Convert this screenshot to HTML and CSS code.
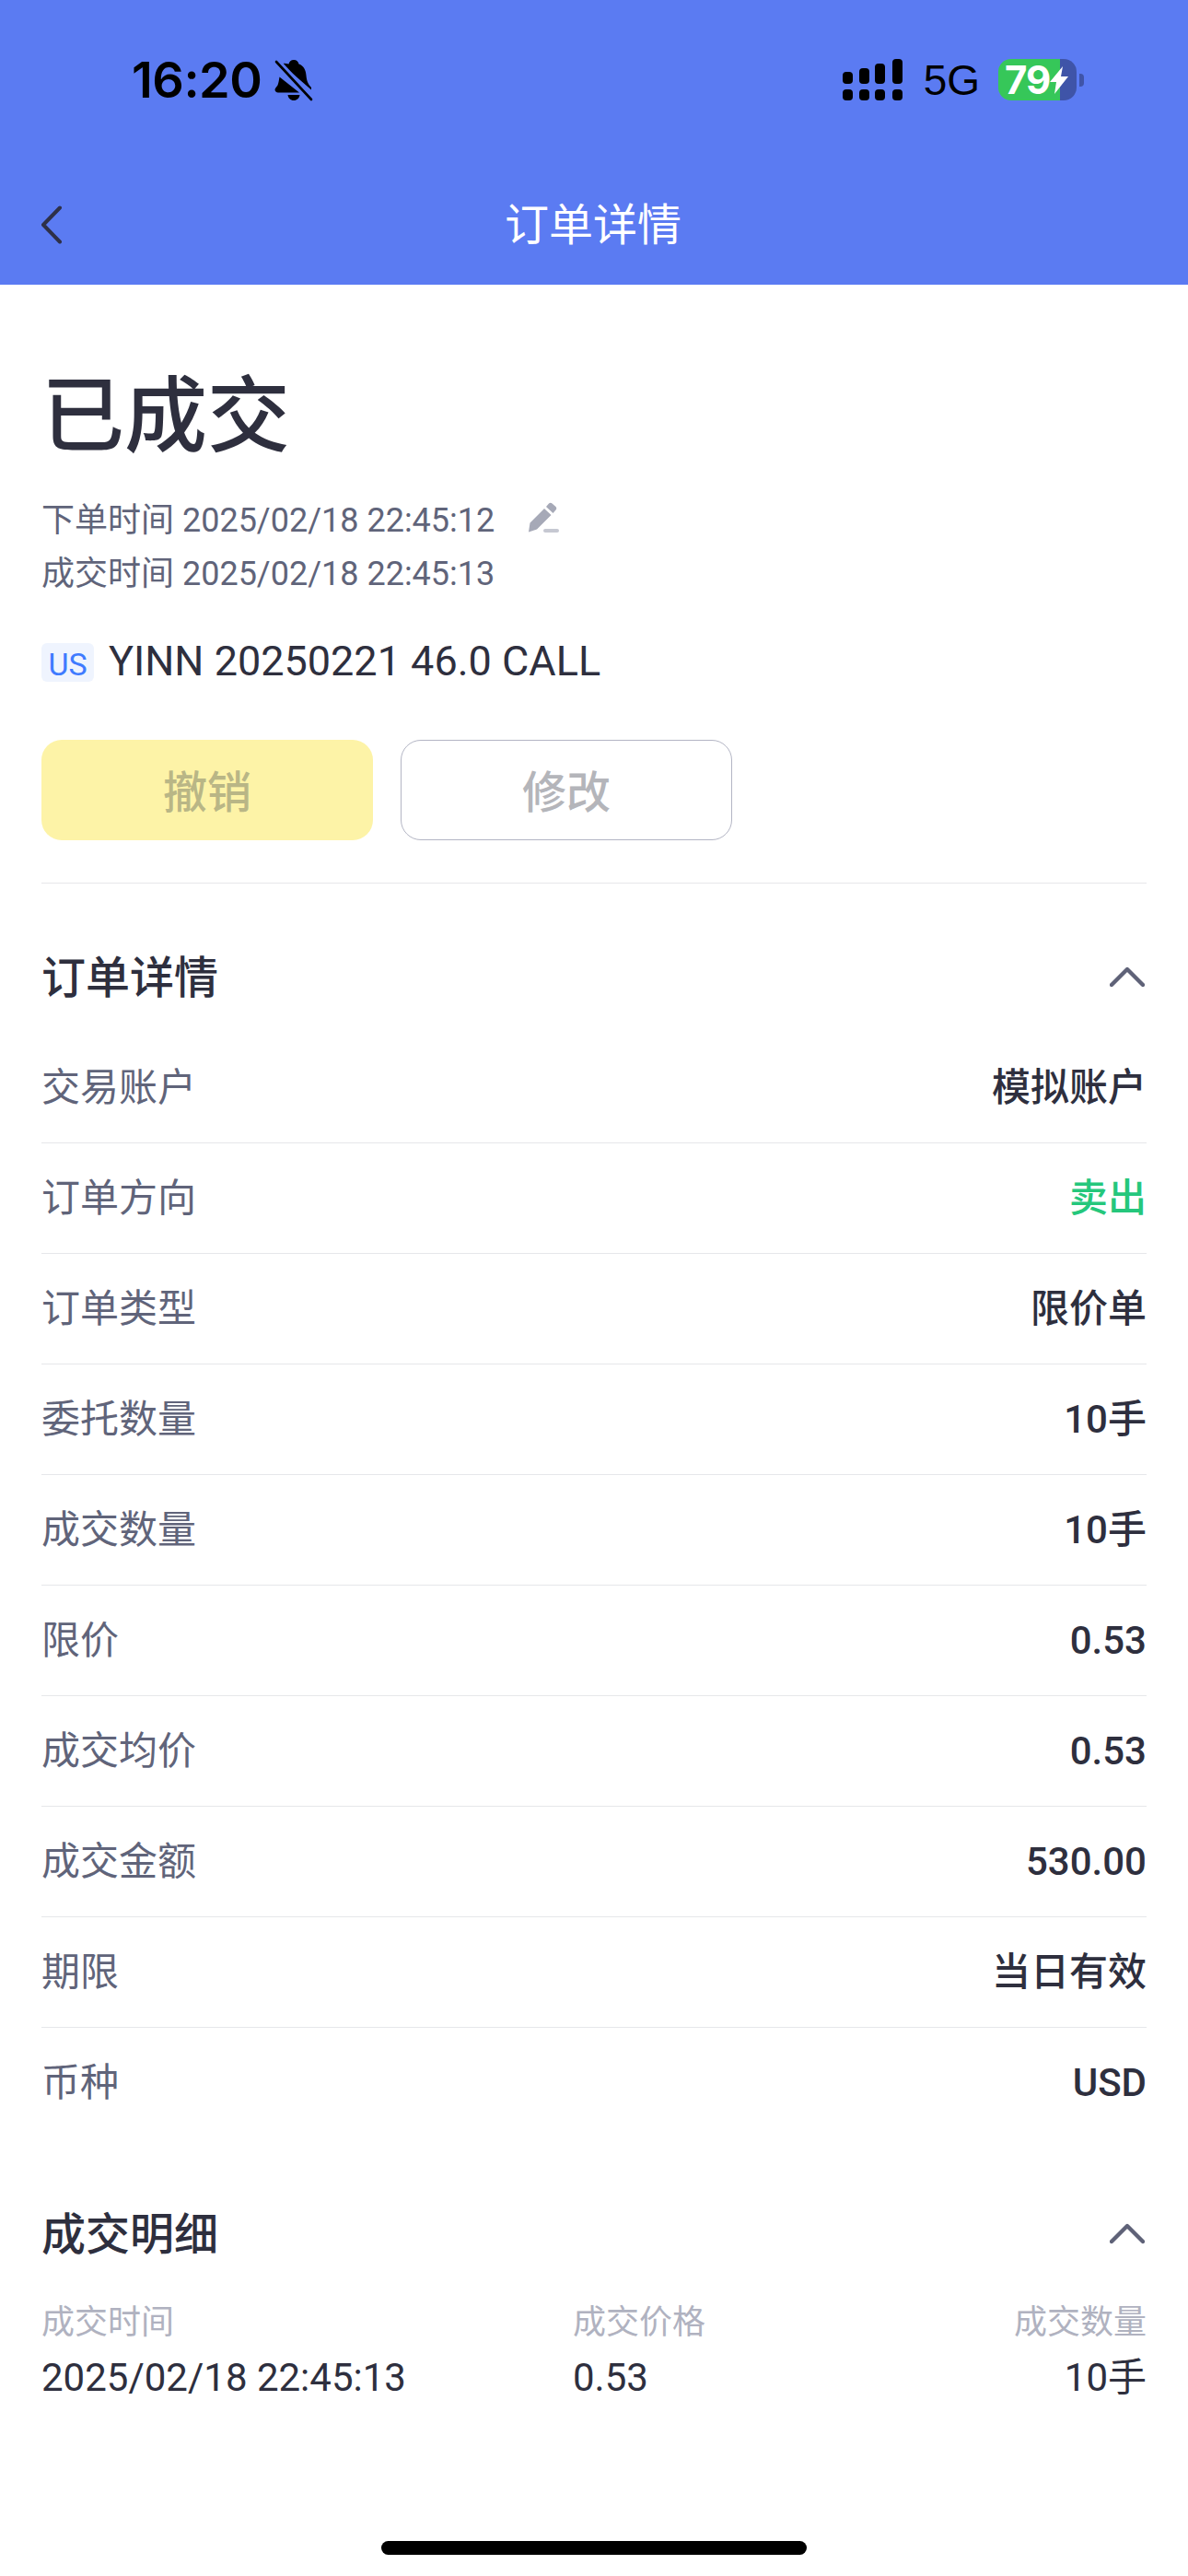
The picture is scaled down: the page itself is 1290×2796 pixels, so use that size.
FILE: index.html
```html
<!DOCTYPE html>
<html lang="zh-CN">
<head>
    <meta charset="UTF-8">
    <meta name="viewport" content="width=device-width, initial-scale=1.0">
    <title>订单详情</title>
    <link rel="stylesheet" href="styles.css">
</head>
<body>
    <header class="top">
        <div class="status">
            <div class="status-left">
                <span class="clock">16:20</span>
                <svg class="bell" viewBox="0 0 42 46" width="42" height="46">
                    <path d="M21 1c3 0 5 2 5.500 4.500C32 7.500 34 12 34.500 18c.5 6 2 9 5.500 13v2.500L8 5.500C10 4 12.500 5 15.500 5.500 16 3 18 1 21 1zM5.500 19.500 27 36.500H4c-2 0-3.500-1.500-3.500-3 0-2 2-3 3-5 1-2.500 1.500-6 2-9zM14.500 39h13c-.5 3.500-3 6-6.500 6s-6-2.500-6.500-6z" fill="#000"/>
                    <path d="M2 3l38 41" stroke="#000" stroke-width="2.600" stroke-linecap="round"/>
                    <path d="M5 1.500l36 39" stroke="#5b7bf2" stroke-width="2.400"/>
                </svg>
            </div>
            <div class="status-right">
                <svg class="signal" viewBox="0 0 65 45" width="65" height="45">
                    <rect x="0" y="14" width="11" height="13" rx="4"/>
                    <rect x="18" y="10" width="11" height="17" rx="4"/>
                    <rect x="35" y="5" width="11" height="22" rx="4"/>
                    <rect x="54" y="0" width="11" height="27" rx="4"/>
                    <rect x="0" y="33" width="11" height="12" rx="4"/>
                    <rect x="18" y="33" width="11" height="12" rx="4"/>
                    <rect x="35" y="33" width="11" height="12" rx="4"/>
                    <rect x="54" y="33" width="11" height="12" rx="4"/>
                </svg>
                <span class="net">5G</span>
                <div class="battery">
                    <span class="battery-num">79</span>
                    <svg class="bolt" viewBox="0 0 20 30" width="20" height="30">
                        <path d="M14 0 0 17h7L5 30 20 11h-8z" fill="#fff"/>
                    </svg>
                </div>
                <span class="battery-cap"></span>
            </div>
        </div>
        <nav class="nav">
            <svg class="back" viewBox="0 0 24 42" width="24" height="42">
                <path d="M21 2.500 3 21l18 18.500" fill="none" stroke="#2e3048" stroke-width="4" stroke-linecap="round" stroke-linejoin="round"/>
            </svg>
            <span class="nav-title">订单详情</span>
        </nav>
    </header>

    <main class="content">
        <h1 class="state">已成交</h1>
        <div class="times">
            <div class="time-line">
                <span>下单时间 2025/02/18 22:45:12</span>
                <svg class="pen" viewBox="0 0 34 34" width="34" height="34">
                    <path d="M23 1.500c1-1 2.500-1 3.500 0l4 3.500c1 1 1 2.500 0 3.500l-3 3.500-7.500-7zM18 7l7.500 7L10 29.500l-9 3 1.500-10z" fill="#a6a9b7"/>
                    <rect x="17" y="29" width="17" height="4" rx="2" fill="#c6c8d2"/>
                </svg>
            </div>
            <div class="time-line">成交时间 2025/02/18 22:45:13</div>
        </div>
        <div class="symbol">
            <span class="market">US</span>
            <span>YINN 20250221 46.0 CALL</span>
        </div>
        <div class="actions">
            <button class="btn btn-cancel">撤销</button>
            <button class="btn btn-edit">修改</button>
        </div>

        <section class="detail">
            <div class="section-head">
                <h2>订单详情</h2>
                <svg class="fold" viewBox="0 0 38 24" width="38" height="24">
                    <path d="M2 21 19 4l17 17" fill="none" stroke="#5f6278" stroke-width="4.400" stroke-linecap="round" stroke-linejoin="round"/>
                </svg>
            </div>
            <div class="row"><span class="row-label">交易账户</span><span class="row-value">模拟账户</span></div>
            <div class="row"><span class="row-label">订单方向</span><span class="row-value sell">卖出</span></div>
            <div class="row"><span class="row-label">订单类型</span><span class="row-value">限价单</span></div>
            <div class="row"><span class="row-label">委托数量</span><span class="row-value">10手</span></div>
            <div class="row"><span class="row-label">成交数量</span><span class="row-value">10手</span></div>
            <div class="row"><span class="row-label">限价</span><span class="row-value">0.53</span></div>
            <div class="row"><span class="row-label">成交均价</span><span class="row-value">0.53</span></div>
            <div class="row"><span class="row-label">成交金额</span><span class="row-value">530.00</span></div>
            <div class="row"><span class="row-label">期限</span><span class="row-value">当日有效</span></div>
            <div class="row"><span class="row-label">币种</span><span class="row-value">USD</span></div>
        </section>

        <section class="fills">
            <div class="section-head">
                <h2>成交明细</h2>
                <svg class="fold" viewBox="0 0 38 24" width="38" height="24">
                    <path d="M2 21 19 4l17 17" fill="none" stroke="#5f6278" stroke-width="4.400" stroke-linecap="round" stroke-linejoin="round"/>
                </svg>
            </div>
            <div class="fill-grid">
                <span class="fill-label">成交时间</span>
                <span class="fill-label">成交价格</span>
                <span class="fill-label right">成交数量</span>
                <span class="fill-value">2025/02/18 22:45:13</span>
                <span class="fill-value">0.53</span>
                <span class="fill-value right">10手</span>
            </div>
        </section>
    </main>

    <div class="home-bar"></div>
</body>
</html>
```

FILE: styles.css
```css
html, body {
    margin: 0;
    padding: 0;
}
body {
    width: 1290px;
    height: 2796px;
    overflow: hidden;
    background-color: #fff;
    color: #2e2f3e;
    font-family: Roboto, "Noto Sans CJK SC", sans-serif;
    position: relative;
}

/* Blue header */
.top {
    height: 309px;
    background-color: #5b7bf2;
}
.status {
    height: 177px;
    box-sizing: border-box;
    padding: 64px 113px 0 143px;
    display: flex;
    justify-content: space-between;
    align-items: flex-start;
    color: #000;
}
.status-left, .status-right {
    display: flex;
    align-items: center;
    height: 45px;
}
.clock {
    font-family: Inter, "Liberation Sans", sans-serif;
    font-size: 54px;
    font-weight: 600;
    letter-spacing: -0.5px;
}
.bell {
    margin-left: 14px;
}
.signal {
    fill: #000;
}
.net {
    font-family: "Liberation Sans", sans-serif;
    font-size: 46px;
    margin-left: 23px;
    margin-right: 20px;
}
.battery {
    width: 85px;
    height: 45px;
    border-radius: 14px;
    background: linear-gradient(90deg, #36c759 79%, #3f54a8 79%);
    display: flex;
    align-items: center;
    box-sizing: border-box;
    padding-left: 7px;
    color: #fff;
}
.battery-num {
    font-family: Inter, "Liberation Sans", sans-serif;
    font-size: 42px;
    font-weight: 700;
    letter-spacing: -1px;
}
.bolt {
    margin-left: 0;
    flex-shrink: 0;
}
.battery-cap {
    width: 5px;
    height: 14px;
    margin-left: 3px;
    background-color: #3f54a8;
    border-radius: 0 4px 4px 0;
}
.nav {
    height: 132px;
    box-sizing: border-box;
    padding: 0 2px 6px 0;
    display: flex;
    align-items: center;
    justify-content: center;
    position: relative;
}
.back {
    position: absolute;
    left: 44px;
    top: 46px;
}
.nav-title {
    color: #fff;
    font-size: 48px;
}

/* Order summary */
.content {
    padding: 0 45px;
}
.state {
    margin: 0;
    padding-top: 79px;
    font-size: 90px;
    line-height: 130px;
    font-weight: 500;
}
.times {
    margin-top: 14px;
    font-size: 36px;
    color: #60647a;
}
.time-line {
    display: flex;
    align-items: center;
    height: 58px;
}
.pen {
    margin-left: 36px;
    margin-top: 2px;
}
.symbol {
    margin-top: 39px;
    display: flex;
    align-items: center;
    font-size: 45px;
    height: 60px;
    gap: 16px;
}
.market {
    width: 57px;
    height: 42px;
    line-height: 46px;
    border-radius: 6px;
    background-color: #eff4fe;
    color: #3f7bff;
    font-size: 34px;
    text-align: center;
    margin-top: 4px;
}
.actions {
    margin-top: 56px;
    display: flex;
    gap: 30px;
    padding-bottom: 46px;
    border-bottom: 1px solid #e6e7ea;
}
.btn {
    width: 360px;
    height: 109px;
    border-radius: 22px;
    font-family: inherit;
    font-size: 48px;
    font-weight: 500;
    padding: 0 0 4px;
}
.btn-cancel {
    background-color: #fdf3a7;
    border: none;
    color: #b9b686;
}
.btn-edit {
    background-color: #fff;
    border: 1px solid #b3b5c4;
    color: #b4b5ba;
}

/* Detail rows */
.section-head {
    display: flex;
    justify-content: space-between;
    align-items: center;
    height: 60px;
}
.section-head h2 {
    margin: 0;
    font-size: 48px;
    font-weight: 500;
}
.detail .section-head {
    margin-top: 68px;
    margin-bottom: 34px;
}
.fold {
    margin-right: 2px;
    margin-top: 6px;
}
.row {
    display: flex;
    justify-content: space-between;
    height: 119px;
    line-height: 119px;
    border-bottom: 1px solid #e6e7ea;
    font-size: 42px;
}
.row:last-child {
    border-bottom: none;
}
.row-label {
    color: #60647a;
}
.row-value {
    font-weight: 500;
}
.sell {
    color: #25c77c;
}

/* Fills table */
.fills .section-head {
    margin-top: 71px;
}
.fill-grid {
    display: grid;
    grid-template-columns: 577px 1fr auto;
    margin-top: 45px;
}
.fill-label {
    font-size: 36px;
    line-height: 50px;
    color: #b0b2c0;
}
.fill-value {
    font-size: 42px;
    line-height: 60px;
    margin-top: 5px;
}
.right {
    text-align: right;
}

.home-bar {
    position: absolute;
    left: 414px;
    top: 2758px;
    width: 462px;
    height: 15px;
    border-radius: 8px;
    background-color: #000;
}
```
